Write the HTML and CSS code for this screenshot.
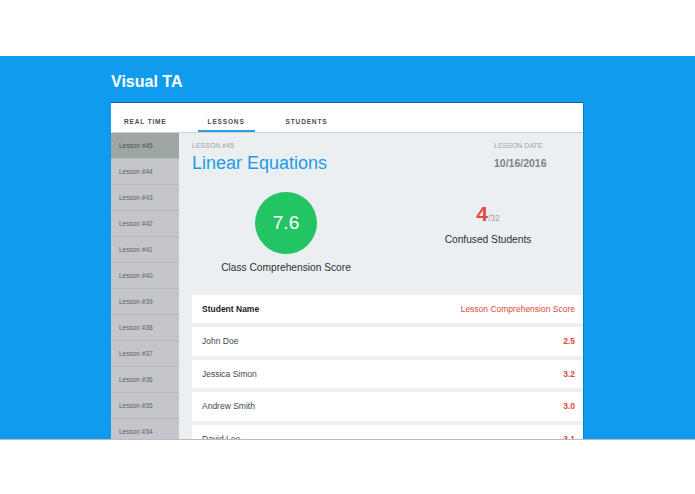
FILE: index.html
```html
<!DOCTYPE html>
<html>
<head>
<meta charset="utf-8">
<title>Visual TA</title>
<link rel="stylesheet" href="styles.css">
</head>
<body>
<div class="top"></div>
<div class="band">
  <h1 class="title">Visual TA</h1>
  <div class="card">
    <nav class="tabs">
      <div class="tab">REAL TIME</div>
      <div class="tab active">LESSONS</div>
      <div class="tab">STUDENTS</div>
    </nav>
    <div class="body">
      <aside class="sidebar">
        <div class="item active">Lesson #45</div>
        <div class="item">Lesson #44</div>
        <div class="item">Lesson #43</div>
        <div class="item">Lesson #42</div>
        <div class="item">Lesson #41</div>
        <div class="item">Lesson #40</div>
        <div class="item">Lesson #39</div>
        <div class="item">Lesson #38</div>
        <div class="item">Lesson #37</div>
        <div class="item">Lesson #36</div>
        <div class="item">Lesson #35</div>
        <div class="item">Lesson #34</div>
      </aside>
      <main class="main">
        <div class="header">
          <div class="lesson">
            <div class="label">LESSON #45</div>
            <div class="name">Linear Equations</div>
          </div>
          <div class="date">
            <div class="label">LESSON DATE</div>
            <div class="date-val">10/16/2016</div>
          </div>
        </div>
        <div class="stats">
          <div class="stat score">
            <div class="circle">7.6</div>
            <div class="stat-label">Class Comprehension Score</div>
          </div>
          <div class="stat confused">
            <div class="count"><span class="big">4</span><span class="small">/32</span></div>
            <div class="stat-label confused-label">Confused Students</div>
          </div>
        </div>
        <div class="table">
          <div class="row head"><span class="col-name">Student Name</span><span class="col-score">Lesson Comprehension Score</span></div>
          <div class="row"><span class="col-name">John Doe</span><span class="col-score">2.5</span></div>
          <div class="row"><span class="col-name">Jessica Simon</span><span class="col-score">3.2</span></div>
          <div class="row"><span class="col-name">Andrew Smith</span><span class="col-score">3.0</span></div>
          <div class="row"><span class="col-name">David Lee</span><span class="col-score">3.1</span></div>
        </div>
      </main>
    </div>
  </div>
</div>
<div class="bottom"></div>
</body>
</html>
```

FILE: styles.css
```css
* { box-sizing: border-box; }
html, body { margin: 0; padding: 0; background: #ffffff; }
body {
  font-family: "Liberation Sans", Arial, Helvetica, sans-serif;
  width: 695px;
  height: 494px;
  overflow: hidden;
}
.top { height: 56px; background: #ffffff; }
.band {
  height: 383px;
  background: #0f9cef;
  padding-left: 111px;
  overflow: hidden;
}
.title {
  margin: 0;
  padding-top: 17px;
  margin-bottom: 12px;
  font-size: 16px;
  line-height: 18px;
  font-weight: 700;
  color: #ffffff;
}
.card {
  width: 472px;
  height: 336px;
  background: #ffffff;
  overflow: hidden;
  box-shadow: 0 -1px 0 rgba(0,0,0,0.35), 1px 0 0 rgba(0,0,0,0.18);
}
.tabs {
  height: 30px;
  display: flex;
  align-items: flex-end;
  gap: 21px;
  padding-left: 3px;
  border-bottom: 1px solid #cfd2d4;
}
.tab {
  padding: 0 10px 4px;
  font-size: 6.5px;
  line-height: 9px;
  font-weight: 700;
  letter-spacing: 0.85px;
  color: #4a4d50;
  border-bottom: 2px solid transparent;
}
.tab.active { border-bottom-color: #2b9be3; }
.body {
  display: flex;
  height: 306px;
}
.sidebar {
  width: 68px;
  flex: none;
  background: #c4c6cb;
  overflow: hidden;
}
.item {
  height: 26px;
  line-height: 25px;
  padding-left: 8px;
  font-size: 6.5px;
  color: #5e6163;
  border-bottom: 1px solid #b4b7bc;
}
.item.active { background: #9ea7a4; color: #4b5150; }
.main {
  flex: 1;
  background: #eceff1;
  padding: 8px 0 0 13px;
  overflow: hidden;
}
.header { display: flex; }
.label {
  font-size: 7px;
  line-height: 9px;
  color: #9ba3a6;
}
.name {
  margin-top: 3px;
  font-size: 18px;
  line-height: 20px;
  color: #1e9be6;
}
.date { margin-left: auto; width: 89px; }
.date-val {
  margin-top: 3px;
  font-size: 10.5px;
  line-height: 20px;
  font-weight: 700;
  color: #7e8285;
}
.stats {
  display: flex;
  margin-top: 19px;
}
.stat {
  display: flex;
  flex-direction: column;
  align-items: center;
}
.score { width: 188px; }
.confused { width: 180px; margin-left: 18px; padding-top: 10px; }
.circle {
  width: 62px;
  height: 62px;
  border-radius: 50%;
  background: #22c464;
  color: #ffffff;
  font-size: 19px;
  line-height: 62px;
  text-align: center;
}
.stat-label {
  margin-top: 8px;
  font-size: 10.2px;
  line-height: 12px;
  color: #2d3033;
}
.confused-label { margin-top: 8px; }
.count { height: 24px; line-height: 24px; }
.big {
  font-size: 21px;
  font-weight: 700;
  color: #e2493c;
}
.small {
  font-size: 8.5px;
  color: #9a9fa3;
}
.table {
  margin-top: 20.5px;
  display: flex;
  flex-direction: column;
  gap: 4px;
}
.row {
  height: 28.5px;
  flex: none;
  background: #ffffff;
  display: flex;
  justify-content: space-between;
  align-items: center;
  padding: 0 8px 0 10px;
  font-size: 8.5px;
}
.col-name { color: #45484b; }
.col-score { color: #dc4a3c; font-weight: 700; }
.head .col-name { font-weight: 700; color: #222; }
.head .col-score { font-weight: 400; color: #e0473a; }
.bottom {
  height: 55px;
  border-top: 1px solid #b9bcbf;
  background: #ffffff;
}
```
